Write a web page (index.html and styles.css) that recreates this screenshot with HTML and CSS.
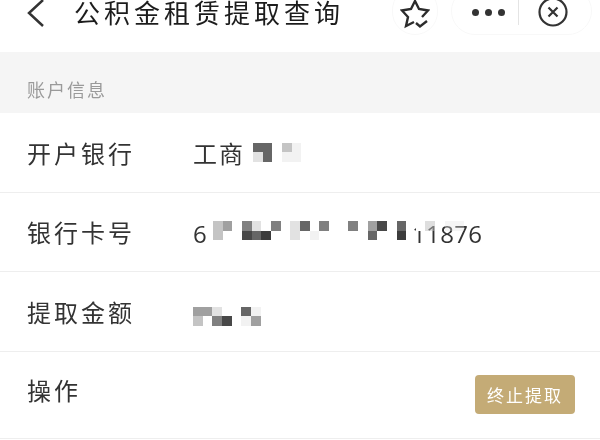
FILE: index.html

```html
<!DOCTYPE html>
<html lang="zh-CN">
<head>
  <meta charset="UTF-8" />
  <title>公积金租赁提取查询</title>
  <link rel="stylesheet" href="styles.css">
</head>
<body>
  <div class="page">
    <header class="topbar">
      <svg class="back" viewBox="0 0 20 32" width="20" height="32"><path d="M17 2 L3 15 L17 28" /></svg>
      <h1 class="title">公积金租赁提取查询</h1>
      <div class="fav">
        <svg viewBox="0 0 30 30" width="30" height="30"><path d="M22 17 L28 10.500 L19 9 L15 1 L11 9 L2 10.500 L8 17 L6 26 L14 22 M16 23 L20 26.500 L27 21" /></svg>
      </div>
      <div class="capsule">
        <div class="dots"><i></i><i></i><i></i></div>
        <div class="divider"></div>
        <svg class="close" viewBox="0 0 30 30" width="30" height="30"><circle cx="15" cy="15" r="13.500" /><path d="M10.500 10.500 L19.500 19.500 M19.500 10.500 L10.500 19.500" /></svg>
      </div>
    </header>

    <div class="section">账户信息</div>

    <div class="row">
      <span class="label">开户银行</span>
      <div class="value">
        <span class="bank">工商</span>
        <div class="mosaic bank-mosaic">
          <i class="d3"></i><i class="d3"></i><i></i><i class="d6"></i><i class="d8"></i>
          <i class="d7"></i><i class="d3"></i><i></i><i class="d8"></i><i class="d8"></i>
        </div>
      </div>
    </div>

    <div class="row">
      <span class="label">银行卡号</span>
      <div class="value">
        <span class="digits">6</span>
        <div class="mosaic card-mosaic">
          <i class="d6"></i><i class="d5"></i><i></i><i class="d4"></i><i class="d7"></i><i></i><i class="d4"></i><i></i><i class="d7"></i><i class="d3"></i><i></i><i class="d4"></i><i></i><i></i><i class="d4"></i><i></i><i class="d5"></i><i class="d2"></i><i></i><i class="d3"></i><i></i><i class="w"></i><i class="haze-dark"></i><i></i><i class="haze"></i><i class="haze"></i>
          <i class="d6"></i><i></i><i></i><i class="d2"></i><i class="d3"></i><i class="d1"></i><i></i><i></i><i class="d7"></i><i></i><i class="d8"></i><i></i><i></i><i></i><i></i><i></i><i class="d3"></i><i></i><i></i><i class="d1"></i>
        </div>
        <span class="digits tail">11876</span>
      </div>
    </div>

    <div class="row">
      <span class="label">提取金额</span>
      <div class="value">
        <div class="mosaic sum-mosaic">
          <i class="d5"></i><i class="d5"></i><i class="d7"></i><i></i><i></i><i class="d3"></i><i class="d8"></i>
          <i class="d6"></i><i></i><i class="d4"></i><i class="d2"></i><i></i><i class="d8"></i><i class="d5"></i>
        </div>
      </div>
    </div>

    <div class="row last">
      <span class="label up">操作</span>
      <button class="stop">终止提取</button>
    </div>
  </div>
</body>
</html>
```

FILE: styles.css

```css
* {
  margin: 0; padding: 0; box-sizing: border-box;
  font-family: "Noto Sans CJK SC", "Liberation Sans", sans-serif;
}
html, body {
  height: 100%;
  overflow: hidden;
  background: #fff;
}
.page {
  filter: blur(0.4px);
}
.topbar {
  display: flex;
  align-items: flex-start;
  height: 52px;
  padding-left: 26px;
  overflow: hidden;
}
.back {
  margin-top: -2px;
  fill: none;
  stroke: #333;
  stroke-width: 2.5;
}
.title {
  margin-left: 28px;
  width: 318px;
  font-size: 26px;
  line-height: 24px;
  font-weight: 400;
  letter-spacing: 4px;
  color: #1c1c1c;
  white-space: nowrap;
}
.fav {
  display: flex;
  justify-content: center;
  flex: none;
  width: 46px;
  height: 48px;
  margin-top: -13px;
  padding-top: 12px;
  border: 1px solid #f8f8f8;
  border-radius: 24px;
}
.fav svg {
  fill: none;
  stroke: #2c2c2c;
  stroke-width: 2.4;
}
.capsule {
  display: flex;
  align-items: center;
  flex: none;
  width: 141px;
  height: 48px;
  margin: -13px 0 0 13px;
  padding: 2px 0 0 20px;
  border: 1px solid #f8f8f8;
  border-radius: 24px;
}
.dots {
  display: flex;
  gap: 6px;
}
.dots i {
  width: 7px;
  height: 7px;
  border-radius: 50%;
  background: #333;
}
.divider {
  width: 1px;
  height: 25px;
  margin: 0 19px 0 13px;
  background: #e4e4e4;
}
.close {
  fill: none;
  stroke: #333;
  stroke-width: 2.2;
}
.section {
  height: 61px;
  padding: 24px 0 0 27px;
  background: #f5f5f5;
  font-size: 18px;
  line-height: 26px;
  letter-spacing: 2px;
  color: #9a9a9a;
}
.row {
  display: flex;
  align-items: center;
  height: 79.500px;
  padding: 0 25px 0 27px;
  border-bottom: 1.500px solid #eeeeee;
}
.row.last {
  justify-content: space-between;
  height: 87px;
}
.label {
  width: 166px;
  font-size: 24px;
  letter-spacing: 3px;
  color: #333;
}
.label.up {
  margin-top: -10px;
}
.value {
  display: flex;
  align-items: center;
}
.bank {
  font-size: 24px;
  letter-spacing: 2px;
  color: #333;
}
.digits {
  margin-top: 3px;
  font-family: "Open Sans", sans-serif;
  font-size: 24px;
  letter-spacing: 0.300px;
  color: #333;
}
.tail {
  margin-left: -52px;
}
.mosaic {
  display: grid;
  grid-auto-rows: 9.670px;
  position: relative;
  z-index: 1;
}
.bank-mosaic {
  grid-template-columns: repeat(5, 9.670px);
  margin-left: 8px;
}
.card-mosaic {
  grid-template-columns: repeat(26, 9.670px);
  margin-left: 6px;
  margin-top: -2px;
}
.sum-mosaic {
  grid-template-columns: repeat(7, 9.670px);
  margin-top: 10px;
}
.d1 { background: #3c3c3c; }
.d2 { background: #484848; }
.d3 { background: #666; }
.d4 { background: #808080; }
.d5 { background: #a0a0a0; }
.d6 { background: #c4c4c4; }
.d7 { background: #e2e2e2; }
.d8 { background: #f2f2f2; }
.w { background: #fff; }
.haze { background: rgba(225, 225, 225, 0.35); }
.haze-dark { background: rgba(190, 190, 190, 0.5); }
.stop {
  width: 100px;
  height: 39px;
  border: none;
  border-radius: 4px;
  background: #c4ab76;
  color: #fff;
  font-size: 17px;
  letter-spacing: 2px;
}
```
